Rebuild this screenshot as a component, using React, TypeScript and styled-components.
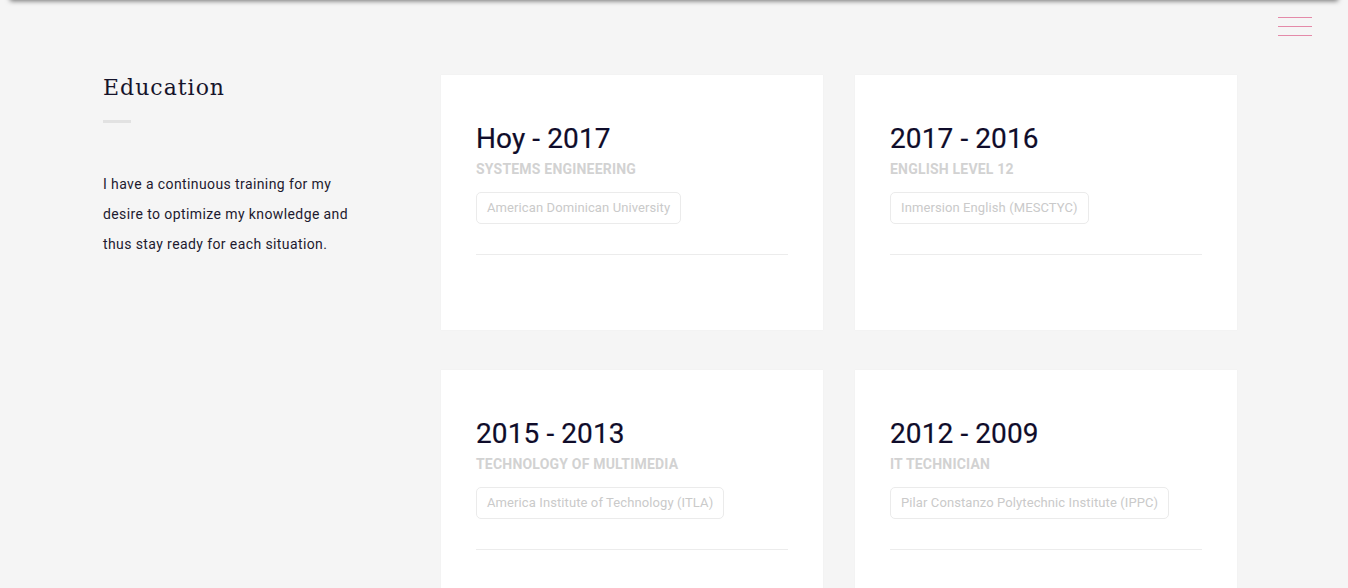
import React from "react";
import styled, { createGlobalStyle } from "styled-components";

const Global = createGlobalStyle`
  html, body { margin: 0; padding: 0; background: #f5f5f5; }
  body { font-family: Roboto, "Noto Sans", sans-serif; overflow: hidden; }
  * { box-sizing: border-box; }
`;

const TopShadow = styled.div`
  position: fixed;
  top: -10px;
  left: 10px;
  right: 10px;
  height: 10px;
  background: #888;
  box-shadow: 0 1px 5px rgba(0, 0, 0, 0.55);
  z-index: 5;
`;

const Burger = styled.button`
  position: fixed;
  top: 17px;
  right: 36px;
  width: 34px;
  height: 19px;
  padding: 0;
  border: 0;
  background: none;
  display: flex;
  flex-direction: column;
  justify-content: space-between;
  cursor: pointer;
`;

const BurgerLine = styled.span`
  display: block;
  height: 1px;
  width: 100%;
  background: #e48aa9;
`;

const Page = styled.main`
  display: flex;
  padding: 75px 0 0 103px;
  min-height: 588px;
`;

const Intro = styled.section`
  width: 338px;
  flex-shrink: 0;
`;

const Title = styled.h2`
  margin: 0;
  font-family: "DejaVu Serif", serif;
  font-weight: 400;
  font-size: 22px;
  letter-spacing: 1px;
  line-height: 26px;
  color: #16142b;
`;

const Rule = styled.div`
  width: 28px;
  height: 3px;
  background: #e2e2e2;
  margin-top: 19px;
`;

const Lead = styled.p`
  margin: 46px 0 0;
  width: 252px;
  font-size: 14px;
  line-height: 30px;
  color: #1d1a2f;
  letter-spacing: 0.4px;
`;

const Grid = styled.div`
  display: grid;
  grid-template-columns: repeat(2, 382px);
  column-gap: 32px;
  row-gap: 40px;
  align-content: start;
`;

const Card = styled.article`
  background: #fff;
  height: 255px;
  padding: 47px 35px 0;
  box-shadow: 0 0 1px rgba(0, 0, 0, 0.06);
`;

const Years = styled.h3`
  margin: 0;
  font-size: 28px;
  font-weight: 400;
  line-height: 34px;
  letter-spacing: 0.1px;
  color: #0f0c2a;
  -webkit-text-stroke: 0.2px #0f0c2a;
`;

const Degree = styled.div`
  margin-top: 4px;
  font-size: 14px;
  font-weight: 700;
  line-height: 18px;
  color: #d2d2d2;
  text-transform: uppercase;
  letter-spacing: 0.2px;
`;

const Tag = styled.span`
  display: inline-block;
  margin-top: 14px;
  height: 32px;
  line-height: 30px;
  padding: 0 10px;
  border: 1px solid #ebebeb;
  border-radius: 5px;
  font-size: 13px;
  color: #cacaca;
  letter-spacing: 0.1px;
`;

const Divider = styled.hr`
  margin: 30px 0 0;
  border: 0;
  border-top: 1px solid #ececec;
`;

const items = [
  { years: "Hoy - 2017", degree: "Systems Engineering", place: "American Dominican University" },
  { years: "2017 - 2016", degree: "English Level 12", place: "Inmersion English (MESCTYC)" },
  { years: "2015 - 2013", degree: "Technology of Multimedia", place: "America Institute of Technology (ITLA)" },
  { years: "2012 - 2009", degree: "IT Technician", place: "Pilar Constanzo Polytechnic Institute (IPPC)" },
];

export default function App() {
  return (
    <>
      <Global />
      <TopShadow />
      <Burger aria-label="menu">
        <BurgerLine />
        <BurgerLine />
        <BurgerLine />
      </Burger>
      <Page>
        <Intro>
          <Title>Education</Title>
          <Rule />
          <Lead>
            I have a continuous training for my desire to optimize my knowledge and thus stay ready for each situation.
          </Lead>
        </Intro>
        <Grid>
          {items.map((it) => (
            <Card key={it.years}>
              <Years>{it.years}</Years>
              <Degree>{it.degree}</Degree>
              <Tag>{it.place}</Tag>
              <Divider />
            </Card>
          ))}
        </Grid>
      </Page>
    </>
  );
}
